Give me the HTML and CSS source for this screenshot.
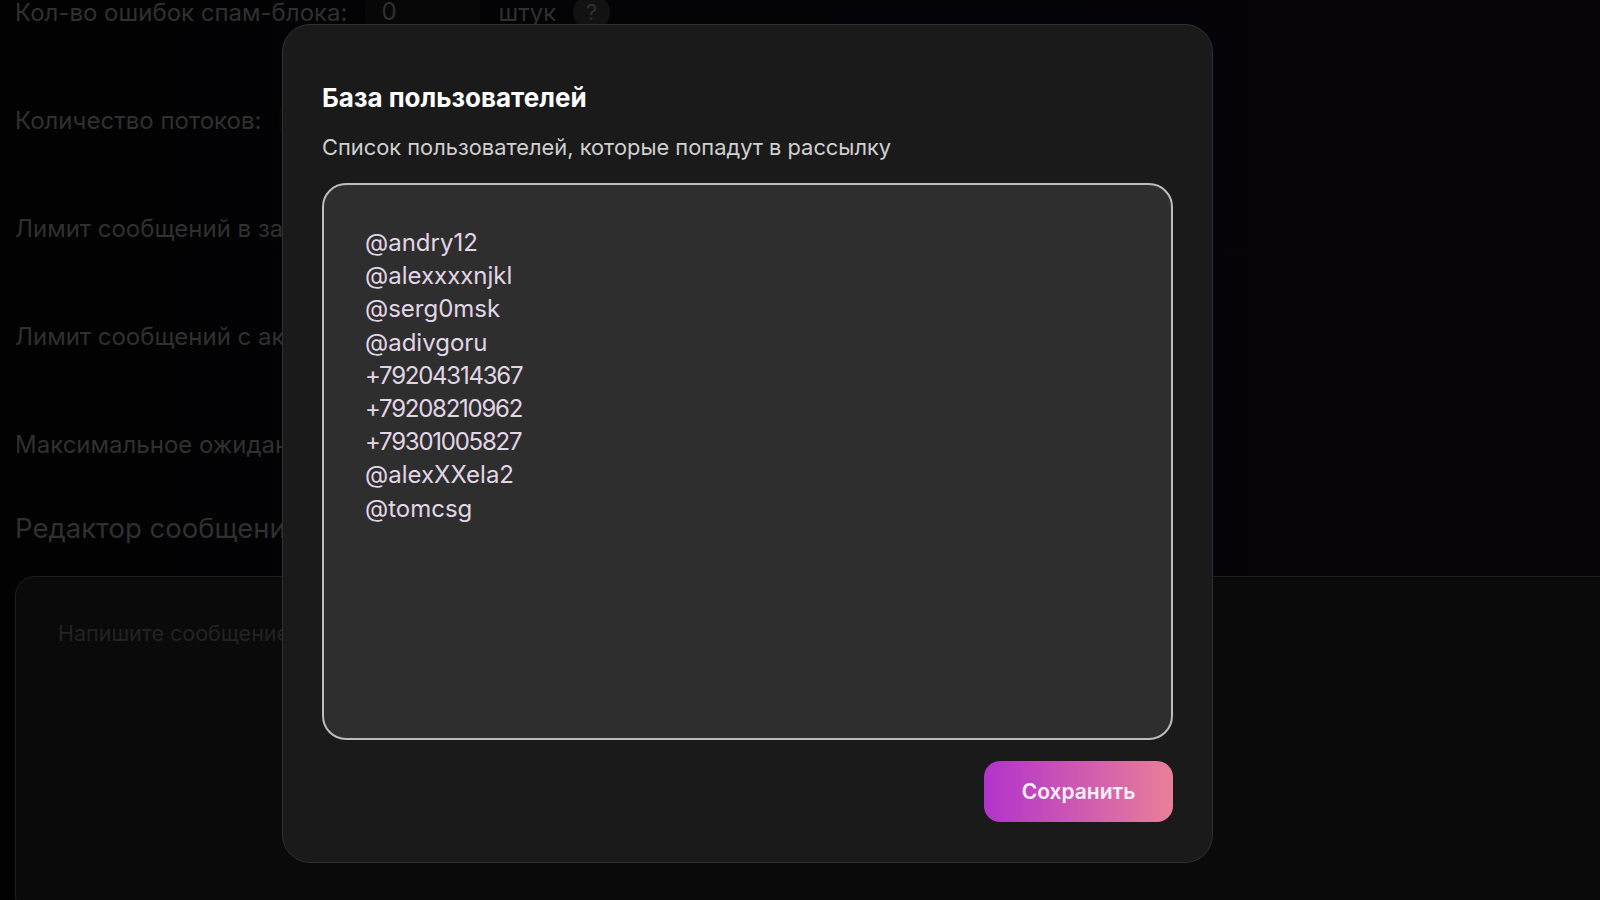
FILE: index.html
```html
<!DOCTYPE html>
<html lang="ru">
<head>
    <meta charset="UTF-8">
    <title>База пользователей</title>
    <link rel="stylesheet" href="styles.css">
</head>
<body>

<div class="page">
    <div class="setting-row">
        <span class="setting-label">Кол-во ошибок спам-блока:</span>
        <div class="setting-input">0</div>
        <span class="setting-unit">штук</span>
        <div class="hint">?</div>
    </div>
    <div class="setting-row">
        <span class="setting-label">Количество потоков:</span>
        <div class="setting-input"></div>
    </div>
    <div class="setting-row">
        <span class="setting-label">Лимит сообщений в задержку:</span>
    </div>
    <div class="setting-row">
        <span class="setting-label">Лимит сообщений с аккаунта:</span>
    </div>
    <div class="setting-row">
        <span class="setting-label">Максимальное ожидание:</span>
    </div>

    <h2 class="editor-title">Редактор сообщений</h2>
    <div class="editor">
        <div class="editor-placeholder">Напишите сообщение</div>
    </div>
</div>

<div class="overlay">
    <div class="modal">
        <h1 class="modal-title">База пользователей</h1>
        <p class="modal-subtitle">Список пользователей, которые попадут в рассылку</p>
        <div class="user-list">
            <div>@andry12</div>
            <div>@alexxxxnjkl</div>
            <div>@serg0msk</div>
            <div>@adivgoru</div>
            <div class="user-phone">+79204314367</div>
            <div class="user-phone">+79208210962</div>
            <div class="user-phone">+79301005827</div>
            <div>@alexXXela2</div>
            <div>@tomcsg</div>
        </div>
        <div class="modal-footer">
            <button class="save-button">Сохранить</button>
        </div>
    </div>
</div>

</body>
</html>
```
FILE: styles.css
```css
* {
    box-sizing: border-box;
}

html, body {
    height: 900px;
    margin: 0;
    overflow: hidden;
}

body {
    background: linear-gradient(90deg, #020203, #060409);
    font-family: Inter, "Noto Sans", sans-serif;
    position: relative;
}

.page {
    padding-left: 15px;
}

.setting-row {
    display: flex;
    align-items: center;
    height: 24px;
    margin-bottom: 84px;
    font-size: 24px;
    color: #303030;
}

.setting-label {
    white-space: nowrap;
    margin-right: 18px;
}

.setting-input {
    width: 115px;
    height: 36px;
    padding-left: 16px;
    border-radius: 10px;
    background-color: #070707;
    line-height: 36px;
}

.setting-unit {
    margin-left: 18px;
}

.hint {
    width: 37px;
    height: 37px;
    margin-left: 17px;
    border-radius: 50%;
    background-color: #121212;
    text-align: center;
    font-size: 22px;
    line-height: 37px;
}

.editor-title {
    margin: -28px 0 32px;
    font-size: 27.5px;
    font-weight: 400;
    line-height: 32px;
    color: #303030;
}

.editor {
    height: 340px;
    margin-right: -40px;
    padding: 43px 42px;
    border: 1px solid #1f1f21;
    border-radius: 20px;
    background-color: #0a0a0b;
}

.editor-placeholder {
    font-size: 21.5px;
    white-space: nowrap;
    color: #232323;
}

.overlay {
    position: absolute;
    top: 24px;
    left: 282px;
}

.modal {
    width: 931px;
    height: 839px;
    padding: 57px 39px 0;
    border: 1px solid #303030;
    border-radius: 28px;
    background-color: #1a1a1b;
}

.modal-title {
    margin: 0;
    font-size: 26px;
    font-weight: 700;
    line-height: 32px;
    color: #fff;
}

.modal-subtitle {
    margin: 20px 0 0;
    font-size: 21.85px;
    line-height: 26px;
    color: #d0d0d0;
}

.user-list {
    width: 851px;
    height: 557px;
    margin-top: 23px;
    padding: 41px 41px;
    border: 2px solid #bdbdbd;
    border-radius: 24px;
    background-color: #2e2e2e;
    font-size: 24px;
    line-height: 33.2px;
    color: #e2d6e6;
}

.user-phone {
    letter-spacing: -1.25px;
}

.modal-footer {
    display: flex;
    justify-content: flex-end;
    margin-top: 21px;
}

.save-button {
    width: 189px;
    height: 61px;
    border: none;
    border-radius: 16px;
    background: linear-gradient(90deg, #b233cc, #e97f98);
    font-family: inherit;
    font-size: 21px;
    font-weight: 600;
    color: #fbeef8;
}
```
